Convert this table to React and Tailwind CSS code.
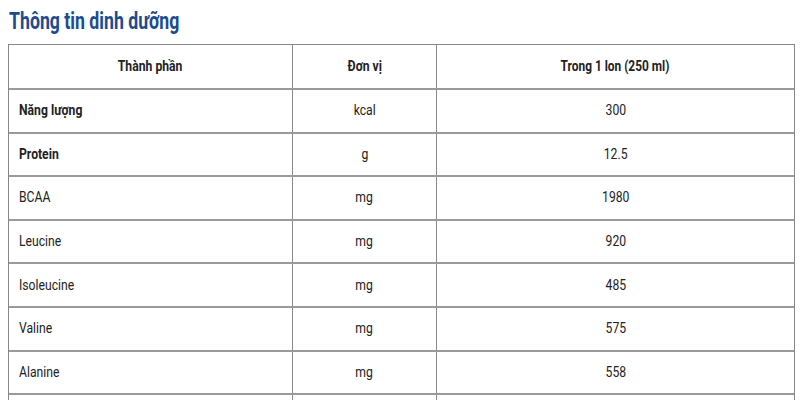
export default function App() {
  const rows = [
    ["Năng lượng", "kcal", "300", true],
    ["Protein", "g", "12.5", true],
    ["BCAA", "mg", "1980"],
    ["Leucine", "mg", "920"],
    ["Isoleucine", "mg", "485"],
    ["Valine", "mg", "575"],
    ["Alanine", "mg", "558"],
    ["Glycine", "mg", "400"],
  ];
  const font = { fontFamily: '"Roboto", sans-serif' };
  return (
    <div className="w-[800px] h-[400px] overflow-hidden bg-white" style={font}>
      <h2 className="pl-[9px] pt-[9px] h-[44px] text-[23px] font-bold text-[#1d4b8f] leading-[26px]">
        <span className="inline-block origin-left scale-x-[0.77]">Thông tin dinh dưỡng</span>
      </h2>
      <div className="ml-[8px] w-[787px] border border-[#888] text-[14px] text-[#222]">
        <div className="grid grid-cols-[284px_144px_1fr] h-[43px] font-bold">
          <div className="flex items-center justify-center border-r border-[#888]"><span className="inline-block scale-x-[0.87]">Thành phần</span></div>
          <div className="flex items-center justify-center border-r border-[#888]"><span className="inline-block scale-x-[0.87]">Đơn vị</span></div>
          <div className="flex items-center justify-center"><span className="inline-block scale-x-[0.85]">Trong 1 lon (250 ml)</span></div>
        </div>
        {rows.map(([a, b, c, bold]) => (
          <div key={a} className="grid grid-cols-[284px_144px_1fr] h-[43.6px] border-t-2 border-[#9a9a9a]">
            <div className={"flex items-center pl-[10px] border-r border-[#888] " + (bold ? "font-bold" : "")}><span className="inline-block origin-left scale-x-[0.87]">{a}</span></div>
            <div className="flex items-center justify-center border-r border-[#888]"><span className="inline-block scale-x-[0.87]">{b}</span></div>
            <div className="flex items-center justify-center"><span className="inline-block scale-x-[0.87]">{c}</span></div>
          </div>
        ))}
      </div>
    </div>
  );
}
